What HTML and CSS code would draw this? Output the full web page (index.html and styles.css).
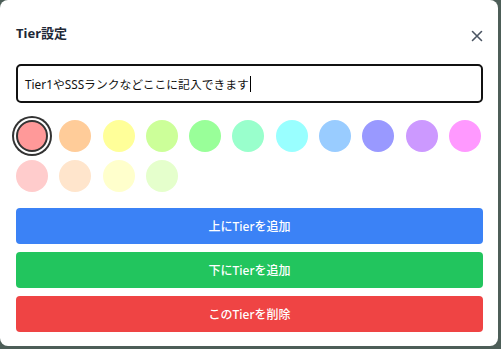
FILE: index.html
```html
<!DOCTYPE html>
<html lang="ja">
<head>
<meta charset="utf-8">
<title>Tier設定</title>
<link rel="stylesheet" href="styles.css">
</head>
<body>
<div class="modal">
  <div class="header">
    <h2 class="title">Tier設定</h2>
    <button class="close" aria-label="閉じる">
      <svg width="12" height="12" viewBox="0 0 12 12"><path d="M1.5 1.5 L10.5 10.5 M10.5 1.5 L1.5 10.5" stroke="#4b5563" stroke-width="1.6" stroke-linecap="round" fill="none"/></svg>
    </button>
  </div>
  <div class="field"><span class="field-text">Tier1やSSSランクなどここに記入できます</span><span class="caret"></span></div>
  <div class="swatches">
    <span class="swatch selected" style="background:#ff9999"></span>
    <span class="swatch" style="background:#ffcc99"></span>
    <span class="swatch" style="background:#ffff99"></span>
    <span class="swatch" style="background:#ccff99"></span>
    <span class="swatch" style="background:#99ff99"></span>
    <span class="swatch" style="background:#99ffcc"></span>
    <span class="swatch" style="background:#99ffff"></span>
    <span class="swatch" style="background:#99ccff"></span>
    <span class="swatch" style="background:#9999ff"></span>
    <span class="swatch" style="background:#cc99ff"></span>
    <span class="swatch" style="background:#ff99ff"></span>
    <span class="swatch" style="background:#ffcccc"></span>
    <span class="swatch" style="background:#ffe5cc"></span>
    <span class="swatch" style="background:#ffffcc"></span>
    <span class="swatch" style="background:#e5ffcc"></span>
  </div>
  <div class="actions">
    <button class="btn btn-blue">上にTierを追加</button>
    <button class="btn btn-green">下にTierを追加</button>
    <button class="btn btn-red">このTierを削除</button>
  </div>
</div>
</body>
</html>
```
FILE: styles.css
```css
html, body {
  margin: 0;
  padding: 0;
}
body {
  width: 501px;
  height: 349px;
  background: #4d5e58;
  font-family: "Noto Sans", "Noto Sans CJK JP", sans-serif;
  overflow: hidden;
}
.modal {
  box-sizing: border-box;
  width: 498px;
  height: 346px;
  background: #ffffff;
  border-radius: 8px;
  padding: 23px 15px 0 16px;
  display: flex;
  flex-direction: column;
}
.header {
  display: flex;
  align-items: center;
  justify-content: space-between;
  height: 20px;
}
.title {
  margin: 0;
  font-size: 13px;
  font-weight: 700;
  color: #1f2937;
  line-height: 20px;
}
.close {
  border: 0;
  background: none;
  padding: 0;
  margin: 6px 0 0 0;
  width: 12px;
  height: 12px;
  display: flex;
}
.field {
  margin-top: 21px;
  box-sizing: border-box;
  height: 39px;
  border: 2px solid #111111;
  border-radius: 5px;
  padding: 0 7px;
  display: flex;
  align-items: center;
  font-size: 11.8px;
  color: #111111;
}
.caret {
  display: inline-block;
  width: 1px;
  height: 16px;
  background: #000;
  margin-left: 1px;
}
.swatches {
  margin-top: 17px;
  display: flex;
  flex-wrap: wrap;
  column-gap: 11.3px;
  row-gap: 8px;
}
.swatch {
  box-sizing: border-box;
  width: 32px;
  height: 32px;
  border-radius: 50%;
}
.swatch.selected {
  border: 2px solid #333333;
  box-shadow: 0 0 0 2px #ffffff, 0 0 0 4px #333333;
}
.actions {
  margin-top: 16px;
  display: flex;
  flex-direction: column;
  gap: 8px;
}
.btn {
  height: 36px;
  border: 0;
  border-radius: 4px;
  color: #ffffff;
  font-family: inherit;
  font-size: 12px;
  font-weight: 500;
}
.btn-blue { background: #3b82f6; }
.btn-green { background: #22c55e; }
.btn-red { background: #ef4444; }
```
